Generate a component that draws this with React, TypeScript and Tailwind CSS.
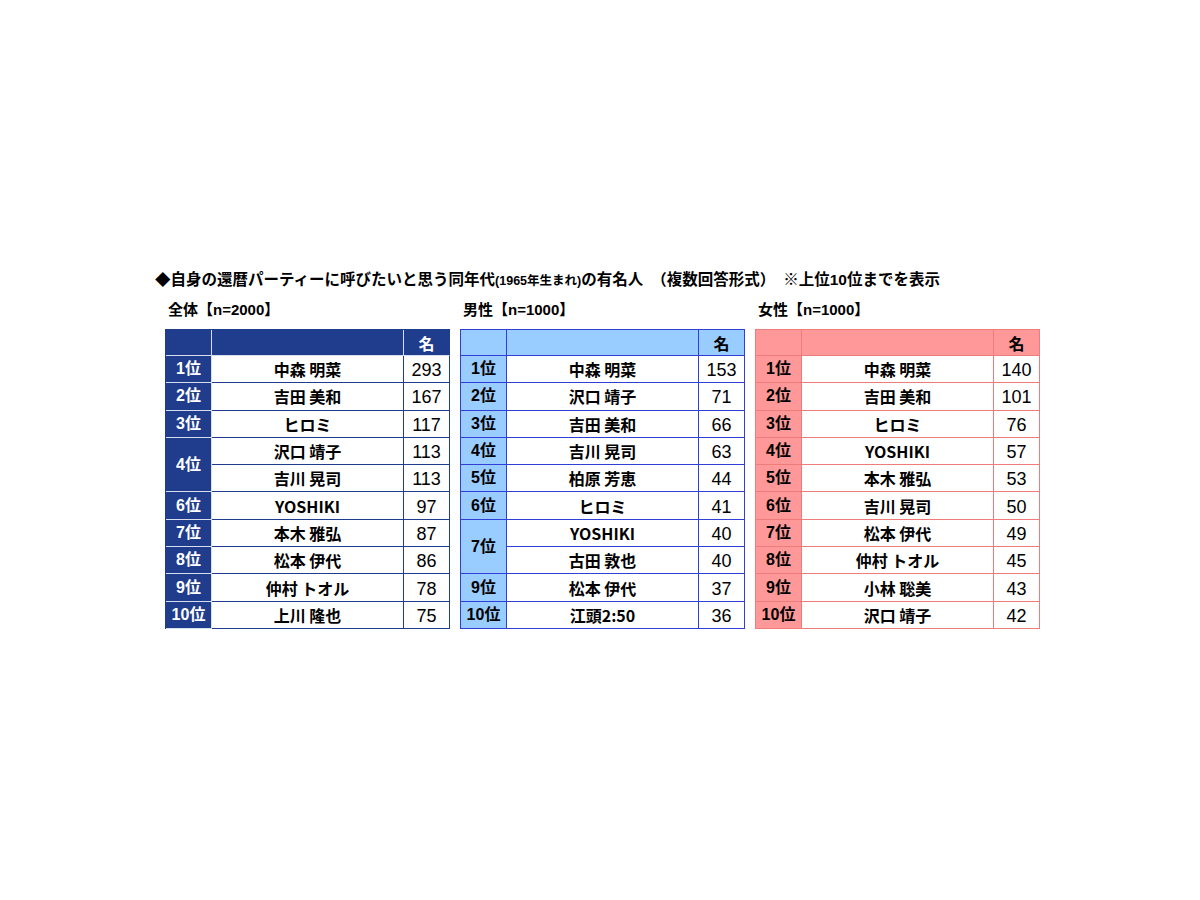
import React from 'react';

interface Entry {
  name: string;
  count: number;
}

interface Group {
  rank: string;
  items: Entry[];
}

interface Theme {
  outer: string;
  head: string;
  headLast: string;
  rank: string;
  cell: string;
}

const overall: Group[] = [
  { rank: '1位', items: [{ name: '中森 明菜', count: 293 }] },
  { rank: '2位', items: [{ name: '吉田 美和', count: 167 }] },
  { rank: '3位', items: [{ name: 'ヒロミ', count: 117 }] },
  {
    rank: '4位',
    items: [
      { name: '沢口 靖子', count: 113 },
      { name: '吉川 晃司', count: 113 },
    ],
  },
  { rank: '6位', items: [{ name: 'YOSHIKI', count: 97 }] },
  { rank: '7位', items: [{ name: '本木 雅弘', count: 87 }] },
  { rank: '8位', items: [{ name: '松本 伊代', count: 86 }] },
  { rank: '9位', items: [{ name: '仲村 トオル', count: 78 }] },
  { rank: '10位', items: [{ name: '上川 隆也', count: 75 }] },
];

const male: Group[] = [
  { rank: '1位', items: [{ name: '中森 明菜', count: 153 }] },
  { rank: '2位', items: [{ name: '沢口 靖子', count: 71 }] },
  { rank: '3位', items: [{ name: '吉田 美和', count: 66 }] },
  { rank: '4位', items: [{ name: '吉川 晃司', count: 63 }] },
  { rank: '5位', items: [{ name: '柏原 芳恵', count: 44 }] },
  { rank: '6位', items: [{ name: 'ヒロミ', count: 41 }] },
  {
    rank: '7位',
    items: [
      { name: 'YOSHIKI', count: 40 },
      { name: '古田 敦也', count: 40 },
    ],
  },
  { rank: '9位', items: [{ name: '松本 伊代', count: 37 }] },
  { rank: '10位', items: [{ name: '江頭2:50', count: 36 }] },
];

const female: Group[] = [
  { rank: '1位', items: [{ name: '中森 明菜', count: 140 }] },
  { rank: '2位', items: [{ name: '吉田 美和', count: 101 }] },
  { rank: '3位', items: [{ name: 'ヒロミ', count: 76 }] },
  { rank: '4位', items: [{ name: 'YOSHIKI', count: 57 }] },
  { rank: '5位', items: [{ name: '本木 雅弘', count: 53 }] },
  { rank: '6位', items: [{ name: '吉川 晃司', count: 50 }] },
  { rank: '7位', items: [{ name: '松本 伊代', count: 49 }] },
  { rank: '8位', items: [{ name: '仲村 トオル', count: 45 }] },
  { rank: '9位', items: [{ name: '小林 聡美', count: 43 }] },
  { rank: '10位', items: [{ name: '沢口 靖子', count: 42 }] },
];

const navy: Theme = {
  outer: 'border-t border-l border-[#203c8c]',
  head: 'bg-[#203c8c] border-r border-b border-[#d6ddee]',
  headLast: 'bg-[#203c8c] text-white border-r border-b border-r-[#203c8c] border-b-[#d6ddee]',
  rank: 'bg-[#203c8c] text-white border-r border-b border-[#d6ddee]',
  cell: 'bg-white border-r border-b border-[#203c8c]',
};

const sky: Theme = {
  outer: 'border-t border-l border-[#2f3fd8]',
  head: 'bg-[#99ccff] border-r border-b border-[#2f3fd8]',
  headLast: 'bg-[#99ccff] text-black border-r border-b border-[#2f3fd8]',
  rank: 'bg-[#99ccff] text-black border-r border-b border-[#2f3fd8]',
  cell: 'bg-white border-r border-b border-[#2f3fd8]',
};

const rose: Theme = {
  outer: 'border-t border-l border-[#f07b7b]',
  head: 'bg-[#ff9999] border-r border-b border-[#f07b7b]',
  headLast: 'bg-[#ff9999] text-black border-r border-b border-[#f07b7b]',
  rank: 'bg-[#ff9999] text-black border-r border-b border-[#f07b7b]',
  cell: 'bg-white border-r border-b border-[#f07b7b]',
};

function RankTable({ title, groups, theme }: { title: string; groups: Group[]; theme: Theme }) {
  return (
    <div className="w-[285px]">
      <div className="h-[20px] leading-[20px] pl-[3px] text-[15px] font-bold text-black">{title}</div>
      <div
        className={`mt-[9px] grid grid-cols-[46px_192px_46px] grid-rows-[26px_repeat(10,27.3px)] ${theme.outer}`}
      >
        <div className={`col-start-1 ${theme.head}`} />
        <div className={`col-start-2 ${theme.head}`} />
        <div
          className={`col-start-3 flex items-center justify-center text-[16px] font-bold font-['Noto_Sans_CJK_JP',sans-serif] ${theme.headLast}`}
        >
          名
        </div>
        {groups.map((g) => (
          <React.Fragment key={g.rank}>
            <div
              className={`col-start-1 flex items-center justify-center text-[16px] font-bold ${
                g.items.length > 1 ? 'row-span-2' : ''
              } ${theme.rank}`}
            >
              {g.rank}
            </div>
            {g.items.map((it) => (
              <React.Fragment key={it.name}>
                <div
                  className={`col-start-2 flex items-center justify-center leading-none text-[16px] font-bold text-black font-['Noto_Sans_CJK_JP',sans-serif] ${theme.cell}`}
                >
                  {it.name}
                </div>
                <div
                  className={`col-start-3 flex items-center justify-center leading-none pt-[2px] text-[18px] text-black ${theme.cell}`}
                >
                  {it.count}
                </div>
              </React.Fragment>
            ))}
          </React.Fragment>
        ))}
      </div>
    </div>
  );
}

export default function App() {
  return (
    <div className="w-[1200px] h-[900px] bg-white pt-[270px] pl-[155px] font-['Liberation_Sans','Noto_Sans_CJK_JP',sans-serif]">
      <div className="h-[20px] leading-[20px] text-[15.5px] font-bold text-black whitespace-nowrap">
        ◆自身の還暦パーティーに呼びたいと思う同年代
        <span className="text-[12.5px]">(1965年生まれ)</span>
        の有名人<span className="inline-block w-[8px]" />（複数回答形式）<span className="inline-block w-[8px]" />
        ※上位10位までを表示
      </div>
      <div className="mt-[10px] pl-[10px] flex gap-[10px]">
        <RankTable title="全体【n=2000】" groups={overall} theme={navy} />
        <RankTable title="男性【n=1000】" groups={male} theme={sky} />
        <RankTable title="女性【n=1000】" groups={female} theme={rose} />
      </div>
    </div>
  );
}
